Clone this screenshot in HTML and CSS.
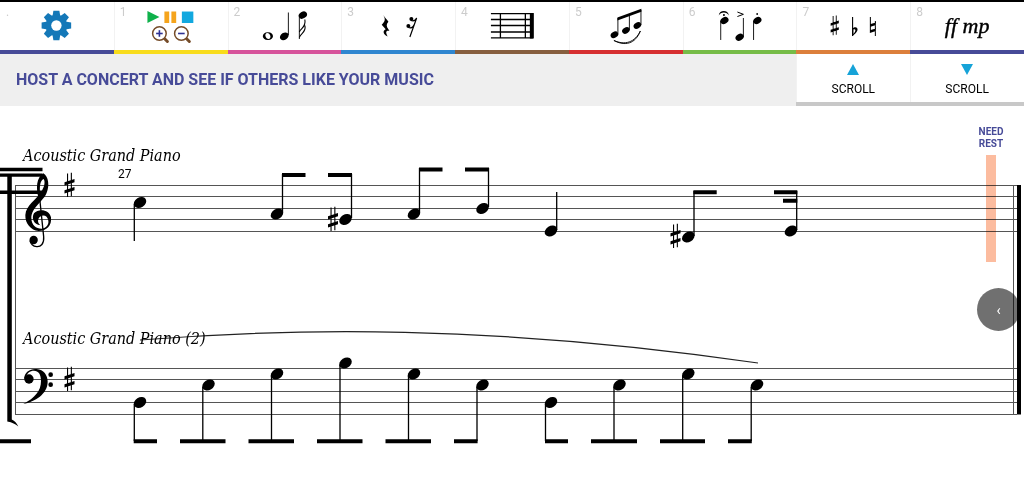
FILE: index.html
```html
<!DOCTYPE html>
<html lang="en">
<head>
<meta charset="utf-8">
<title>Music Editor</title>
<link rel="stylesheet" href="styles.css">
</head>
<body>
<svg class="defs" aria-hidden="true">
  <defs>
    <ellipse id="head" rx="6.7" ry="5" transform="rotate(-32)"/>
    <path id="sharp" d="M-2.5-11.500h1.100V12h-1.100zM1.300-12.300h1.100V11.300H1.300zM-5-2.800 5-6v3.200L-5 .4zM-5 5.200 5 2V5.200L-5 8.400z"/>
  </defs>
</svg>
<header>
  <nav class="tools" aria-label="Tools">
    <button class="tool navy" aria-label="Settings"><span class="num">.</span>
      <svg class="icon" viewBox="0 2 114 48">
        <g fill="#1478b8" transform="translate(56.5 25.5)">
          <g id="teeth"><path d="M-3-14.800h6l1 6h-8zM-3 14.800h6l1-6h-8z"/><path d="M-3-14.800h6l1 6h-8zM-3 14.800h6l1-6h-8z" transform="rotate(90)"/></g>
          <use href="#teeth" transform="rotate(45)"/>
          <circle r="10.800"/>
          <circle r="5.200" fill="#fff"/>
        </g>
      </svg></button>
    <button class="tool yellow" aria-label="Play and zoom"><span class="num">1</span>
      <svg class="icon" viewBox="114 2 114 48">
        <path fill="#0fb14b" d="M147.5 11v12l12-6z"/>
        <path fill="#f5a41c" d="M164.5 11.500h4.800v11.500h-4.800zM171.500 11.500h4.800v11.500h-4.800z"/>
        <path fill="#12a8df" d="M182 11.500h11.500v11.500H182z"/>
        <g id="lens"><path stroke="#754c29" stroke-width="3" stroke-linecap="round" d="m164.500 38.500 3 3"/><circle cx="159.500" cy="33.500" r="6.800" fill="#fff" stroke="#754c29" stroke-width="1.500"/><path stroke="#2e3192" stroke-width="1.600" d="M156.200 33.500h6.600"/></g>
        <path stroke="#2e3192" stroke-width="1.600" d="M159.500 30.200v6.600"/>
        <use href="#lens" x="22"/>
      </svg></button>
    <button class="tool pink" aria-label="Notes"><span class="num">2</span>
      <svg class="icon" viewBox="227 2 114 48">
        <path fill-rule="evenodd" d="M267 32.200c6.800 0 6.800 7.800 0 7.800s-6.800-7.800 0-7.800zm-1 .9c-3 .8-1.300 6.300 2 6 3-.8 1.300-6.300-2-6z"/>
        <use href="#head" transform="translate(283.400 36.300) scale(.7)"/><path d="M287 12.500h.9V35h-.9z"/>
        <use href="#head" transform="translate(302 15) scale(.66)"/><path d="M298 15.500h.9V39h-.9z"/>
        <path fill="none" stroke="#000" stroke-width="1.100" d="M298.500 32c1-3.500 7-4.500 5.500-12.500M298.500 37.500c1-4.500 7-4.500 5.600-12"/>
      </svg></button>
    <button class="tool blue" aria-label="Rests"><span class="num">3</span>
      <svg class="icon" viewBox="341 2 114 48">
        <path d="M383.300 15c1.500 2.500 3.800 4.500 5.200 6.700-2.200 2.500-2.300 4.500 0 7.500l1 1.800c-3.500-1-4.200 1.300-1.700 5.500-4-1.500-5.800-5.500-2-7.200-1.400-1.600-2.600-3-4-4.500 3.500-3.500 4-5.600 1.500-9.800z"/>
        <circle cx="411.500" cy="19" r="2"/><circle cx="408.500" cy="26" r="2"/>
        <path fill="none" stroke="#000" stroke-width="1.200" d="M411 20.500c3 1 5-.5 5.800-2.500L410 37M408.500 27.500c3 1 5-.5 5.500-2.500"/>
      </svg></button>
    <button class="tool brown" aria-label="Bars"><span class="num">4</span>
      <svg class="icon" viewBox="455 2 114 48">
        <path stroke="#000" stroke-width="1.300" d="M491 13.500h42M491 19.500h42M491 25.500h42M491 32h42M491 38h42M500.500 13.500V38M525.500 13.500V38"/><path d="M530 13h4v25.500h-4z"/>
      </svg></button>
    <button class="tool red" aria-label="Beams and slurs"><span class="num">5</span>
      <svg class="icon" viewBox="569 2 114 48">
        <use href="#head" transform="translate(614.500 34.800) scale(.6)"/><use href="#head" transform="translate(626 30.500) scale(.6)"/><use href="#head" transform="translate(637.500 25.500) scale(.6)"/>
        <path d="M617.500 17.500 641.500 8.800v3l-24 8.700z"/><path fill="none" stroke="#000" stroke-width=".9" d="M618 18v16.500M629.500 15v15M641.100 10v15M614 40.500c11 5 21 2 26.500-9.500-5 13-15.500 15.500-26.500 9.500"/>
      </svg></button>
    <button class="tool green" aria-label="Articulations"><span class="num">6</span>
      <svg class="icon" viewBox="683 2 114 48">
        <use href="#head" transform="translate(724.500 20.500) scale(.65)"/><use href="#head" transform="translate(739.700 37.200) scale(.65)"/><use href="#head" transform="translate(757.500 20.500) scale(.65)"/>
        <path stroke="#000" stroke-width=".9" d="M720.800 21v19M743.500 18v19M753.700 21v19"/>
        <path d="M718.800 15.500c.5-6 9.500-6 10.200 0-2-4-8.200-4-10.200 0z"/><circle cx="724" cy="15" r="1"/><circle cx="757.300" cy="14" r=".9"/>
        <path fill="none" stroke="#000" d="m737.500 12 6 2.300-6 2.200"/>
      </svg></button>
    <button class="tool orange" aria-label="Accidentals"><span class="num">7</span>
      <svg class="icon" viewBox="797 2 114 48">
        <use href="#sharp" transform="translate(835.800 25.500) scale(.82)"/>
        <path fill="none" stroke="#000" stroke-width="1.100" d="M853.700 17v19"/><path fill-rule="evenodd" d="M853.500 28.500c3-2.500 6-1 5 2-.7 2-3 3.800-5 5.800zm1 1v4.500c2-2 3.300-5.500 0-4.500z"/>
        <path d="M871 17h1v15h-1zM876 21h1v15h-1zM871 24.200l6-1.800v2.700l-6 1.800zM871 30.200l6-1.800v2.700l-6 1.800z"/>
      </svg></button>
    <button class="tool navy" aria-label="Dynamics"><span class="num">8</span><span class="dynamics">ff mp</span></button>
  </nav>
  <div class="bar">
    <h1 class="notice">HOST A CONCERT AND SEE IF OTHERS LIKE YOUR MUSIC</h1>
    <button class="scroll"><svg class="arrow" viewBox="0 0 12 11"><path d="M6 0l6 11H0z"/></svg>SCROLL</button>
    <button class="scroll"><svg class="arrow" viewBox="0 0 12 11"><path d="M0 0h12L6 11z"/></svg>SCROLL</button>
  </div>
</header>
<main class="score">
  <svg class="sheet" viewBox="0 106 1024 376" role="img" aria-label="Score, measure 27">
    <path class="staff" d="M15 185.500H1017M15 196.500H1017M15 208.500H1017M15 219.500H1017M15 231.500H1017M15 368.500H1017M15 379.500H1017M15 391.500H1017M15 402.500H1017M15 414.500H1017M15.500 185V415M1013.500 185V415"/>
    <path d="M1017 185h4v229.500h-4zM7.300 176h4.500v243.500c3 1.500 5 3.500 6.500 7-3-2.500-6-4-11-5zM0 167.700h42.500v3.600H0zM0 173.500h42.500v3.300H0zM0 190.500h42.500v3.500H0z"/>
    <g transform="translate(0 140) scale(.3333)">
      <path d="M117 178C106 145 110 112 130 100C146 110 149 138 140 158C132 182 94 202 94 234C94 255 108 266 125 266C140 264 147 252 145 242C143 227 130 222 120 230C111 238 113 250 122 256C100 254 94 234 102 220C116 204 148 208 153 232C156 257 140 273 116 273C92 271 75 250 76 225C78 195 108 180 124 155C132 142 137 127 131 117C120 122 118 140 121 165Z"/>
      <path fill="none" stroke="#000" stroke-width="4" d="M118 165 131 290C133 312 122 321 110 320C100 319 92 312 90 302"/>
      <circle cx="101" cy="300" r="12.500"/>
    </g>
    <g transform="translate(0 320) scale(.3333)">
      <path d="M72 178C73 155 92 145 110 147C131 149 143 165 143 185C143 222 105 245 70 252C105 233 123 213 123 183C123 162 115 152 102 152C90 152 80 160 78 172Z"/>
      <circle cx="87" cy="177" r="14"/><circle cx="152" cy="164" r="7"/><circle cx="152" cy="194" r="7"/>
    </g>
    <use href="#sharp" x="69.500" y="185"/><use href="#sharp" x="333" y="219"/><use href="#sharp" x="675.500" y="236"/><use href="#sharp" x="69.500" y="379"/>
    <use href="#head" x="140" y="202.500"/><use href="#head" x="277" y="214"/><use href="#head" x="345.500" y="219.500"/><use href="#head" x="414" y="214"/><use href="#head" x="482.500" y="208.500"/><use href="#head" x="551" y="231"/><use href="#head" x="688.300" y="237"/><use href="#head" x="791" y="231"/>
    <use href="#head" x="140" y="402.500"/><use href="#head" x="208.500" y="385"/><use href="#head" x="277" y="374"/><use href="#head" x="345.500" y="363"/><use href="#head" x="414" y="374"/><use href="#head" x="482.500" y="385"/><use href="#head" x="551" y="402.500"/><use href="#head" x="619.500" y="385"/><use href="#head" x="688.300" y="374"/><use href="#head" x="757" y="385"/>
    <path class="stem" d="M134.300 204V241M282.500 212V174M351.500 218V174M419.500 212V168M488.500 207V168M556.700 230V192M694 236V191M796.700 230V191M134.300 404V441M202.800 387V441M271.500 376V441M340 365V441M408.500 376V441M477 387V441M545.500 404V441M614 387V441M682.700 376V441M751.200 387V441"/>
    <path class="beam" d="M282 175H305.500M328 175H352M419 169.500H442.500M465 169.500H489M693.400 192.300H716.700M774 192.300H797.300M783 200.700H797.300M0 441.300H31M133.700 441.300H157M180 441.300H225.500M248.500 441.300H294M317 441.300H362.500M385.500 441.300H431M454 441.300H477.600M545 441.300H568M591 441.300H637M660 441.300H705M728 441.300H751.800"/>
    <path class="slur" d="M140 340C290 328 490 324 758 363"/>
    <text class="part" x="23" y="161">Acoustic Grand Piano</text>
    <text class="part" x="23" y="344">Acoustic Grand Piano (2)</text>
    <text class="measure" x="118" y="178">27</text>
  </svg>
  <aside class="status"><span class="need">NEED REST</span><span class="meter"></span></aside>
  <button class="drawer" aria-label="Open panel">‹</button>
</main>
</body>
</html>
```
FILE: styles.css
```css
* { box-sizing: border-box; }
body { margin: 0; background: #fff; color: #000; font-family: Roboto, "Liberation Sans", sans-serif; }
button { margin: 0; padding: 0; border: 0; background: #fff; color: #000; font: inherit; cursor: pointer; }
.defs { position: absolute; width: 0; height: 0; }

.tools { display: grid; grid-template-columns: repeat(9, minmax(0, 1fr)); border-top: 2px solid #000; }
.tool { position: relative; display: flex; align-items: center; justify-content: center; height: 52px; border-bottom: 4px solid; box-shadow: inset 1px 0 #f2f2f2; }
.tool:first-child { box-shadow: none; }
.num { position: absolute; top: 3px; left: 6px; color: #ccc; font-size: 12px; line-height: 14px; }
.icon { width: 100%; height: 48px; }
.dynamics { font: italic 22px/24px "Liberation Serif", serif; -webkit-text-stroke: 0.4px #000; }
.navy { border-bottom-color: #474b98; }
.yellow { border-bottom-color: #f8dc1c; }
.pink { border-bottom-color: #d6539b; }
.blue { border-bottom-color: #2f86d0; }
.brown { border-bottom-color: #875f3f; }
.red { border-bottom-color: #d62f31; }
.green { border-bottom-color: #76bc48; }
.orange { border-bottom-color: #dc7f3c; }

.bar { display: grid; grid-template-columns: 7fr 1fr 1fr; min-height: 52px; }
.notice { display: flex; align-items: center; margin: 0; padding: 0 16px; background: #efefef; color: #474b98; font-size: 16px; line-height: 20px; font-weight: 700; }
.scroll { display: flex; flex-direction: column; align-items: center; justify-content: center; gap: 6px; padding-top: 4px; box-shadow: inset 1px 0 #f2f2f2; border-bottom: 4px solid #c8c8c8; font-size: 12px; line-height: 16px; }
.arrow { width: 12px; height: 11px; fill: #16a3d8; }

.score { position: relative; }
.sheet { display: block; width: 100%; height: auto; }
.staff { fill: none; stroke: #555; stroke-width: 1; }
.stem { fill: none; stroke: #000; stroke-width: 1.3; }
.beam { fill: none; stroke: #000; stroke-width: 4; }
.slur { fill: none; stroke: #222; stroke-width: 1.2; }
.part { font: italic 16px "DejaVu Serif Condensed", "DejaVu Serif", serif; }
.measure { font-size: 12px; }
.status { position: absolute; top: 20px; right: 16px; width: 34px; display: flex; flex-direction: column; align-items: center; gap: 5px; mix-blend-mode: multiply; }
.need { color: #474b98; font-size: 10px; line-height: 12px; font-weight: 700; text-align: center; }
.meter { width: 10px; height: 107px; background: #fcbc9f; }
.drawer { position: absolute; top: 182px; right: 4px; width: 43px; height: 43px; border-radius: 50%; background: rgba(0, 0, 0, 0.56); color: #fff; font-size: 14px; line-height: 40px; }
```
